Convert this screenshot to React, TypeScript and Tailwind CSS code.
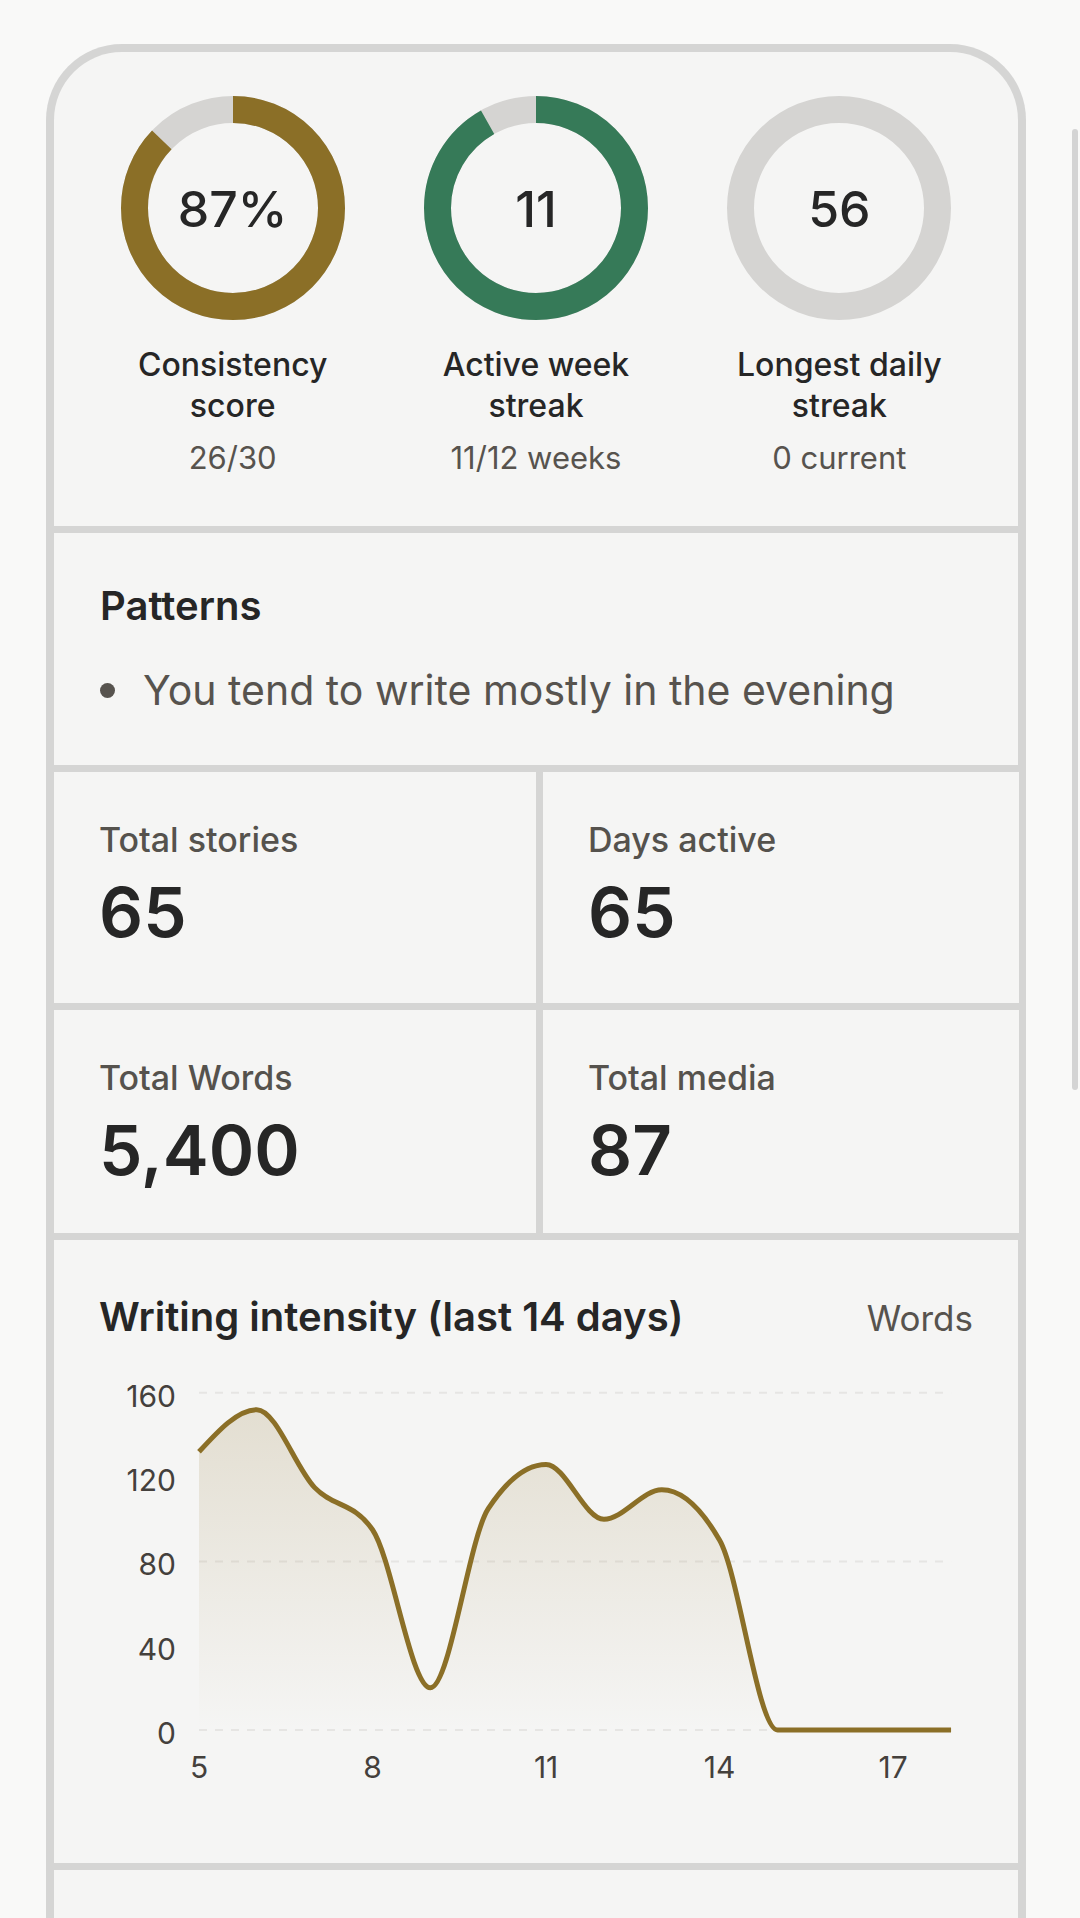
import React from "react";

const GOLD = "#8b6f27";
const GREEN = "#367a58";
const TRACK = "#d5d4d2";

// words per day, days 5..18
const intensity = [132, 152, 115, 95, 20, 105, 126, 100, 114, 90, 0, 0, 0, 0];

function Ring({ pct, color, value }: { pct: number; color: string; value: string }) {
  const r = 98.5;
  const c = 2 * Math.PI * r;
  return (
    <div className="relative w-[224px] h-[224px]">
      <svg width="224" height="224" viewBox="0 0 224 224" className="-rotate-90">
        <circle cx="112" cy="112" r={r} fill="none" stroke={TRACK} strokeWidth="27" />
        {pct > 0 && (
          <circle
            cx="112"
            cy="112"
            r={r}
            fill="none"
            stroke={color}
            strokeWidth="27"
            strokeDasharray={`${c * pct} ${c}`}
          />
        )}
      </svg>
      <div className="absolute inset-0 flex items-center justify-center pt-[2px] text-[50px] font-medium text-[#262626]">
        {value}
      </div>
    </div>
  );
}

function RingStat({ pct, color, value, label, sub }: { pct: number; color: string; value: string; label: string; sub: string }) {
  return (
    <div className="flex flex-col items-center">
      <Ring pct={pct} color={color} value={value} />
      <div className="mt-[24px] w-[250px] text-center text-[32px] leading-[41px] font-medium text-[#262626]">{label}</div>
      <div className="mt-[12px] text-center text-[31px] leading-[40px] text-[#57534e]">{sub}</div>
    </div>
  );
}

function Stat({ label, value }: { label: string; value: string }) {
  return (
    <div className="bg-[#f5f5f4] pt-[48px] pl-[45px]">
      <div className="text-[34px] leading-[40px] font-medium text-[#55524d]">{label}</div>
      <div className="mt-[18px] text-[69px] leading-[69px] font-semibold text-[#262626]">{value}</div>
    </div>
  );
}

// monotone cubic (same idea as d3 curveMonotoneX)
function monotonePath(pts: [number, number][]) {
  const n = pts.length;
  const s: number[] = [];
  for (let i = 0; i < n - 1; i++) s.push((pts[i + 1][1] - pts[i][1]) / (pts[i + 1][0] - pts[i][0]));
  const t: number[] = new Array(n).fill(0);
  for (let i = 1; i < n - 1; i++) {
    const h0 = pts[i][0] - pts[i - 1][0];
    const h1 = pts[i + 1][0] - pts[i][0];
    const s0 = s[i - 1];
    const s1 = s[i];
    const p = (s0 * h1 + s1 * h0) / (h0 + h1);
    t[i] = (Math.sign(s0) + Math.sign(s1)) * Math.min(Math.abs(s0), Math.abs(s1), 0.5 * Math.abs(p)) || 0;
  }
  t[0] = (3 * s[0] - t[1]) / 2;
  t[n - 1] = (3 * s[n - 2] - t[n - 2]) / 2;
  let d = `M${pts[0][0]},${pts[0][1]}`;
  for (let i = 0; i < n - 1; i++) {
    const dx = (pts[i + 1][0] - pts[i][0]) / 3;
    d += ` C${pts[i][0] + dx},${pts[i][1] + dx * t[i]} ${pts[i + 1][0] - dx},${pts[i + 1][1] - dx * t[i + 1]} ${pts[i + 1][0]},${pts[i + 1][1]}`;
  }
  return d;
}

function IntensityChart() {
  const x0 = 145;
  const step = 57.85;
  const y0 = 388;
  const k = 84.3 / 40;
  const pts: [number, number][] = intensity.map((v, i) => [x0 + i * step, y0 - v * k]);
  const line = monotonePath(pts);
  const xEnd = x0 + 13 * step;
  const area = `${line} L${xEnd},${y0} L${x0},${y0} Z`;
  const yTicks = [0, 40, 80, 120, 160];
  const xTicks = [5, 8, 11, 14, 17];
  return (
    <svg width="965" height="462" viewBox="0 0 965 462" className="block">
      <defs>
        <linearGradient id="fillGold" x1="0" y1="0" x2="0" y2="1">
          <stop offset="0%" stopColor={GOLD} stopOpacity="0.17" />
          <stop offset="100%" stopColor={GOLD} stopOpacity="0" />
        </linearGradient>
      </defs>
      {[0, 80, 160].map((v) => (
        <line key={v} x1={x0} x2={xEnd} y1={y0 - v * k} y2={y0 - v * k} stroke="#e6e5e3" strokeWidth="2" strokeDasharray="8 8" />
      ))}
      <path d={area} fill="url(#fillGold)" />
      <path d={line} fill="none" stroke={GOLD} strokeWidth="5" strokeLinejoin="round" />
      {yTicks.map((v) => (
        <text key={v} x="122" y={y0 - v * k + 14} textAnchor="end" fontSize="30" fill="#44403c" fontFamily="Inter, sans-serif">
          {v}
        </text>
      ))}
      {xTicks.map((d) => (
        <text key={d} x={x0 + (d - 5) * step} y="436" textAnchor="middle" fontSize="30" fill="#44403c" fontFamily="Inter, sans-serif">
          {d}
        </text>
      ))}
    </svg>
  );
}

export default function App() {
  return (
    <div className="relative h-[1918px] overflow-hidden bg-[#f9f9f8] font-['Inter','Noto_Sans',sans-serif]">
      <div className="ml-[46px] mt-[44px] w-[980px] rounded-t-[76px] bg-[#d5d5d4] px-[8px] pt-[8px] flex flex-col gap-[7px]">
        {/* rings */}
        <div className="h-[474px] rounded-t-[68px] bg-[#f5f5f4] px-[27px] pt-[44px] grid grid-cols-3">
          <RingStat pct={0.87} color={GOLD} value="87%" label="Consistency score" sub="26/30" />
          <RingStat pct={11 / 12} color={GREEN} value="11" label="Active week streak" sub="11/12 weeks" />
          <RingStat pct={0} color={TRACK} value="56" label="Longest daily streak" sub="0 current" />
        </div>

        {/* patterns */}
        <div className="h-[232px] bg-[#f5f5f4] pl-[46px] pt-[49px]">
          <div className="text-[40px] leading-[48px] font-semibold text-[#262626]">Patterns</div>
          <div className="mt-[34px] flex items-center gap-[28px]">
            <span className="h-[15px] w-[15px] rounded-full bg-[#57534e]" />
            <span className="text-[41px] leading-[52px] text-[#57534e]">You tend to write mostly in the evening</span>
          </div>
        </div>

        {/* totals */}
        <div className="grid grid-cols-[482px_476px] grid-rows-[231px_223px] gap-[7px]">
          <Stat label="Total stories" value="65" />
          <Stat label="Days active" value="65" />
          <Stat label="Total Words" value="5,400" />
          <Stat label="Total media" value="87" />
        </div>

        {/* chart */}
        <div className="h-[623px] bg-[#f5f5f4] pt-[53px]">
          <div className="flex items-baseline justify-between pl-[45px] pr-[45px]">
            <div className="text-[40px] leading-[48px] font-semibold text-[#262626]">Writing intensity (last 14 days)</div>
            <div className="text-[35px] leading-[48px] text-[#57534e]">Words</div>
          </div>
          <IntensityChart />
        </div>

        <div className="h-[80px] bg-[#f5f5f4]" />
      </div>

      {/* scrollbar */}
      <div className="absolute left-[1072px] top-[129px] h-[961px] w-[6px] rounded-full bg-[#d4d4d4]" />
    </div>
  );
}
